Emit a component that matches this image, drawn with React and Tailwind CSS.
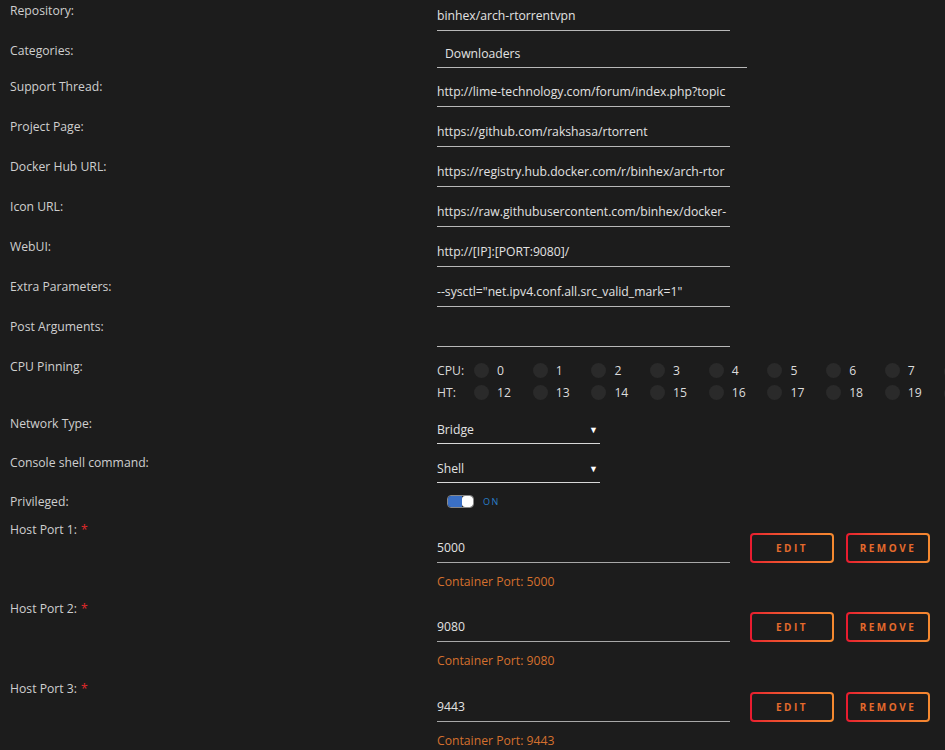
import React from 'react'

const font = { fontFamily: '"Open Sans", "Noto Sans", sans-serif' }

function Label({ children, required }) {
  return (
    <div className="w-[437px] shrink-0 pl-[10px] pt-[4px] text-[12.2px] leading-[14px] text-[#cfcfcf]">
      {children}
      {required ? <span className="ml-[4px] text-[#e02a2a]">*</span> : null}
    </div>
  )
}

function TextField({ value }) {
  return (
    <div className="h-[31px] w-[293px] overflow-hidden whitespace-nowrap border-b border-[#b8b8b8] pt-[9px] text-[12.2px] leading-[14px] text-[#e2e2e2]">
      {value}
    </div>
  )
}

function Row({ label, value, h = 'h-[40px]' }) {
  return (
    <div className={`flex ${h}`}>
      <Label>{label}</Label>
      <TextField value={value} />
    </div>
  )
}

function Select({ value }) {
  return (
    <div className="flex h-[31px] w-[163px] items-start justify-between border-b border-[#d8d8d8] pt-[10px] text-[12.2px] leading-[14px] text-[#e2e2e2]">
      <span>{value}</span>
      <span className="pr-[2px] text-[9px] leading-[14px] text-white">▼</span>
    </div>
  )
}

function GradButton({ children }) {
  return (
    <div className="h-[30px] w-[84px] rounded-[4px] bg-gradient-to-r from-[#e8192f] to-[#f58a30] p-[2px]">
      <div className="flex h-full w-full items-center justify-center rounded-[2px] bg-[#1c1c1c] text-[10px] font-bold tracking-[2.5px] text-[#e46a2c]">
        {children}
      </div>
    </div>
  )
}

function PortRow({ n, port }) {
  return (
    <div className="flex h-[79px]">
      <Label required>Host Port {n}:</Label>
      <div className="flex flex-col">
        <div className="flex items-start">
          <div className="mt-[14px] h-[30px] w-[293px] border-b border-[#a8a8a8] pt-[8px] text-[12.2px] leading-[14px] text-[#e2e2e2]">
            {port}
          </div>
          <div className="ml-[20px] mt-[14px] flex gap-[12px]">
            <GradButton>EDIT</GradButton>
            <GradButton>REMOVE</GradButton>
          </div>
        </div>
        <div className="mt-[12px] text-[12.2px] leading-[14px] text-[#d4702e]">Container Port: {port}</div>
      </div>
    </div>
  )
}

const cpus = [0, 1, 2, 3, 4, 5, 6, 7, 8]

function CpuLine({ label, offset }) {
  return (
    <div className="flex h-[22px] items-center whitespace-nowrap">
      <div className="w-[37px] shrink-0 text-[12.2px] text-[#d8d8d8]">{label}</div>
      {cpus.map((c) => (
        <div key={c} className="flex w-[58.7px] shrink-0 items-center">
          <div className="h-[15px] w-[15px] rounded-full bg-[#2a2a2a]" />
          {c < 8 ? <span className="ml-[8px] text-[12.2px] text-[#dcdcdc]">{c + offset}</span> : null}
        </div>
      ))}
    </div>
  )
}

export default function App() {
  return (
    <div className="h-[750px] w-[945px] overflow-hidden bg-[#1c1c1c]" style={font}>
      <Row label="Repository:" value="binhex/arch-rtorrentvpn" />
      <div className="flex h-[36px]">
        <Label>Categories:</Label>
        <div className="h-[28px] w-[310px] border-b border-[#b8b8b8] pl-[8px] pt-[7px] text-[12.2px] leading-[14px] text-[#e2e2e2]">
          Downloaders
        </div>
      </div>
      <Row label="Support Thread:" value="http://lime-technology.com/forum/index.php?topic" />
      <Row label="Project Page:" value="https://github.com/rakshasa/rtorrent" />
      <Row label="Docker Hub URL:" value="https://registry.hub.docker.com/r/binhex/arch-rtor" />
      <Row label="Icon URL:" value="https://raw.githubusercontent.com/binhex/docker-" />
      <Row label="WebUI:" value="http://[IP]:[PORT:9080]/" />
      <Row label="Extra Parameters:" value={'--sysctl="net.ipv4.conf.all.src_valid_mark=1"'} />
      <Row label="Post Arguments:" value="" />
      <div className="flex h-[57px]">
        <Label>CPU Pinning:</Label>
        <div className="flex-1 overflow-hidden pt-[4px]">
          <CpuLine label="CPU:" offset={0} />
          <CpuLine label="HT:" offset={12} />
        </div>
      </div>
      <div className="flex h-[39px]">
        <Label>Network Type:</Label>
        <Select value="Bridge" />
      </div>
      <div className="flex h-[39px]">
        <Label>Console shell command:</Label>
        <Select value="Shell" />
      </div>
      <div className="flex h-[28px]">
        <Label>Privileged:</Label>
        <div className="flex h-[13px] items-center pl-[10px] mt-[4px]">
          <div className="flex h-[13px] w-[27px] overflow-hidden rounded-[4px] border border-[#888]">
            <div className="h-full w-[14px] bg-[#3a6fc4]" />
            <div className="h-full flex-1 rounded-[3px] bg-white" />
          </div>
          <span className="ml-[9px] text-[9px] tracking-[1.5px] text-[#2a7fc8]">ON</span>
        </div>
      </div>
      <PortRow n={1} port="5000" />
      <PortRow n={2} port="9080" />
      <div className="h-[1px]" />
      <PortRow n={3} port="9443" />
    </div>
  )
}
